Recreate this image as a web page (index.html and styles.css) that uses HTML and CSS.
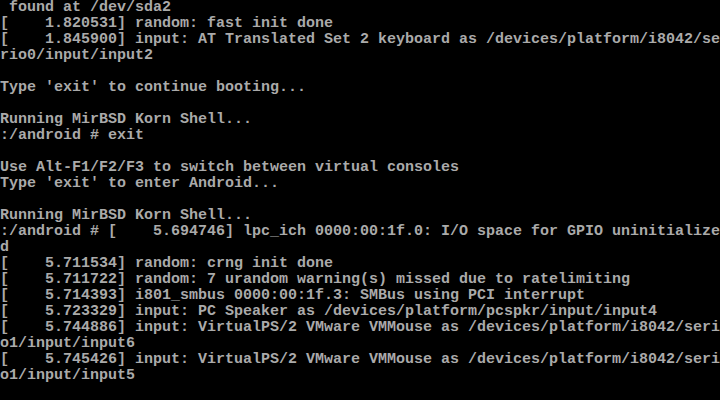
FILE: index.html
```html
<!DOCTYPE html>
<html lang="en">
<head>
    <meta charset="UTF-8">
    <title>Console</title>
    <link rel="stylesheet" href="styles.css">
</head>
<body>

<pre class="console"> found at /dev/sda2
[    1.820531] random: fast init done
[    1.845900] input: AT Translated Set 2 keyboard as /devices/platform/i8042/se
rio0/input/input2

Type 'exit' to continue booting...

Running MirBSD Korn Shell...
:/android # exit

Use Alt-F1/F2/F3 to switch between virtual consoles
Type 'exit' to enter Android...

Running MirBSD Korn Shell...
:/android # [    5.694746] lpc_ich 0000:00:1f.0: I/O space for GPIO uninitialize
d
[    5.711534] random: crng init done
[    5.711722] random: 7 urandom warning(s) missed due to ratelimiting
[    5.714393] i801_smbus 0000:00:1f.3: SMBus using PCI interrupt
[    5.723329] input: PC Speaker as /devices/platform/pcspkr/input/input4
[    5.744886] input: VirtualPS/2 VMware VMMouse as /devices/platform/i8042/seri
o1/input/input6
[    5.745426] input: VirtualPS/2 VMware VMMouse as /devices/platform/i8042/seri
o1/input/input5</pre>

</body>
</html>
```

FILE: styles.css
```css
html, body { margin: 0; padding: 0; background: #000; }
body { width: 720px; height: 400px; overflow: hidden; }

.console {
  margin: 0;
  padding: 0;
  font-family: "Liberation Mono", "DejaVu Sans Mono", monospace;
  font-size: 15px;
  font-weight: bold;
  line-height: 16px;
  color: #aaaaaa;
  white-space: pre;
}
```
